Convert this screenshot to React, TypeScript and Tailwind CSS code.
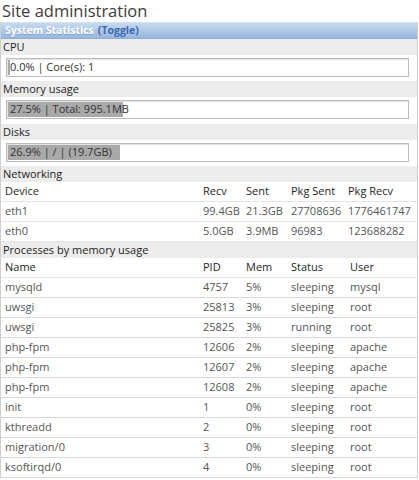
import React from 'react';

const netRows = [
  ['eth1', '99.4GB', '21.3GB', '27708636', '1776461747'],
  ['eth0', '5.0GB', '3.9MB', '96983', '123688282'],
];

const procRows = [
  ['mysqld', '4757', '5%', 'sleeping', 'mysql'],
  ['uwsgi', '25813', '3%', 'sleeping', 'root'],
  ['uwsgi', '25825', '3%', 'running', 'root'],
  ['php-fpm', '12606', '2%', 'sleeping', 'apache'],
  ['php-fpm', '12607', '2%', 'sleeping', 'apache'],
  ['php-fpm', '12608', '2%', 'sleeping', 'apache'],
  ['init', '1', '0%', 'sleeping', 'root'],
  ['kthreadd', '2', '0%', 'sleeping', 'root'],
  ['migration/0', '3', '0%', 'sleeping', 'root'],
  ['ksoftirqd/0', '4', '0%', 'sleeping', 'root'],
];

function Label({ text }: { text: string }) {
  return <div className="h-[16px] bg-[#ececec] pl-[2px] leading-[16px] font-medium text-[#1e1e1e]">{text}</div>;
}

function Bar({ text, fill, rowH }: { text: string; fill: string; rowH: string }) {
  return (
    <div className={`${rowH} pt-[3px] pl-[5px]`}>
      <div className="relative h-[19px] w-[403px] border border-[#bcbcbc] p-[1px] shadow-[inset_1px_1px_1px_rgba(0,0,0,0.12)]">
        <div className={`h-full ${fill} bg-[#a9a9a9]`} />
        <div className="absolute inset-0 flex items-center pl-[3px] text-[#333]">{text}</div>
      </div>
    </div>
  );
}

function App() {
  return (
    <div className="w-[419px] bg-white font-['Open_Sans',sans-serif] text-[11px]">
      <h1 className="h-[22px] pl-[2px] text-[16.5px] font-medium leading-[22px] text-[#3c3c3c]">Site administration</h1>
      <div className="w-[418px] border-x border-[#cfcfcf]">
        <div className="flex h-[17px] items-center border-t border-b border-t-[#d4e2f2] border-b-[#8fadd4] bg-gradient-to-b from-[#c7daef] to-[#98b7dd] pl-[4px] text-[10.5px] font-bold">
          <span className="text-white [text-shadow:0_1px_0_rgba(60,90,140,0.35)]">System Statistics</span>
          <span className="ml-[4px] text-[#3c6aae]">(Toggle)</span>
        </div>
        <Label text="CPU" />
        <Bar text="0.0% | Core(s): 1" fill="w-[2px]" rowH="h-[26px]" />
        <Label text="Memory usage" />
        <Bar text="27.5% | Total: 995.1MB" fill="w-[115px]" rowH="h-[27px]" />
        <Label text="Disks" />
        <Bar text="26.9% | / | (19.7GB)" fill="w-[112px]" rowH="h-[26px]" />
        <Label text="Networking" />
        <div className="grid h-[20px] grid-cols-[198px_43px_45px_57px_1fr] items-center border-b border-[#e4e4e4] font-medium text-[#1e1e1e]">
          {['Device', 'Recv', 'Sent', 'Pkg Sent', 'Pkg Recv'].map((h) => (
            <div key={h} className="pl-[4px]">{h}</div>
          ))}
        </div>
        {netRows.map((r, i) => (
          <div key={i} className="grid h-[20px] grid-cols-[198px_43px_45px_57px_1fr] items-center border-b border-[#e4e4e4] text-[#555] last:border-b-0">
            {r.map((c, j) => (
              <div key={j} className="whitespace-nowrap pl-[4px]">{c}</div>
            ))}
          </div>
        ))}
        <Label text="Processes by memory usage" />
        <div className="grid h-[20px] grid-cols-[198px_43px_45px_59px_1fr] items-center border-b border-[#e4e4e4] font-medium text-[#1e1e1e]">
          {['Name', 'PID', 'Mem', 'Status', 'User'].map((h) => (
            <div key={h} className="pl-[4px]">{h}</div>
          ))}
        </div>
        {procRows.map((r, i) => (
          <div key={i} className="grid h-[20px] grid-cols-[198px_43px_45px_59px_1fr] items-center border-b border-[#d8d8d8] text-[#555]">
            {r.map((c, j) => (
              <div key={j} className="whitespace-nowrap pl-[4px]">{c}</div>
            ))}
          </div>
        ))}
      </div>
    </div>
  );
}

export default App;
